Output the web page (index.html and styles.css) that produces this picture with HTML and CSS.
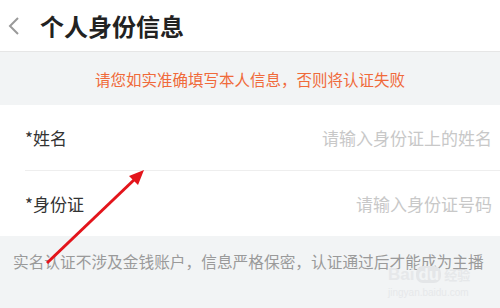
FILE: index.html
```html
<!DOCTYPE html>
<html lang="zh-CN">
<head>
<meta charset="UTF-8" />
<meta name="viewport" content="width=device-width, initial-scale=1.0" />
<title>个人身份信息</title>
<link rel="stylesheet" href="styles.css">
</head>
<body>

<div class="header">
  <svg class="back" width="14" height="20" viewBox="0 0 14 20">
    <path d="M11 2 L3 10 L11 18" fill="none" stroke="#999" stroke-width="2"/>
  </svg>
  <h1>个人身份信息</h1>
</div>

<div class="notice">请您如实准确填写本人信息，否则将认证失败</div>

<div class="form">
  <div class="row">
    <span class="label">*姓名</span>
    <span class="placeholder">请输入身份证上的姓名</span>
  </div>
  <div class="row">
    <span class="label">*身份证</span>
    <span class="placeholder">请输入身份证号码</span>
  </div>
</div>

<div class="footer">实名认证不涉及金钱账户，信息严格保密，认证通过后才能成为主播</div>

<!-- annotation arrow drawn over the screenshot -->
<svg class="arrow" width="500" height="308" viewBox="0 0 500 308">
  <line x1="47" y1="263" x2="136" y2="178" stroke="#e3141b" stroke-width="3"/>
  <polygon points="144,170 129,176 138,185" fill="#e3141b"/>
</svg>

<div class="watermark">
  <div class="wm-big">Bai<span class="wm-du">du</span><span class="wm-cn">经验</span></div>
  <div class="wm-small">jingyan.baidu.com</div>
</div>

</body>
</html>
```

FILE: styles.css
```css
body { margin: 0; width: 500px; height: 308px; overflow: hidden; background-color: #f2f4f5; font-family: "Noto Sans CJK SC", "Noto Sans", sans-serif; position: relative; }
.header { height: 51px; background-color: #fff; display: flex; align-items: center; border-bottom: 1px solid #e6e6e6; }
.back { margin-left: 7px; margin-right: 19px; }
.header h1 { margin: 0; font-size: 24px; font-weight: bold; color: #222; line-height: 1; }
.notice { height: 53px; display: flex; align-items: center; justify-content: center; color: #f06a3a; font-size: 15.5px; }
.form { background-color: #fff; padding-left: 25px; }
.row { height: 65px; display: flex; align-items: center; justify-content: space-between; padding-right: 8px; }
.row + .row { border-top: 1px solid #eeeeee; }
.label { font-size: 17px; color: #333; }
.placeholder { font-size: 17px; color: #c8c8c8; }
.footer { padding-left: 13px; padding-top: 14px; font-size: 15.7px; color: #9a9a9a; white-space: nowrap; }
.arrow { position: absolute; left: 0; top: 0; }
.watermark { position: absolute; left: 388px; top: 266px; color: #e6e8ea; font-family: "Liberation Sans", sans-serif; white-space: nowrap; }
.wm-big { font-size: 17px; font-weight: bold; line-height: 1; display: flex; align-items: center; }
.wm-du { background-color: #e4e6e8; color: #f2f4f5; border-radius: 7px; padding: 0 2px; margin-left: 2px; }
.wm-cn { font-family: "Noto Sans CJK SC", sans-serif; font-size: 13px; margin-left: 3px; }
.wm-small { font-size: 10px; margin-top: 4px; }
```
